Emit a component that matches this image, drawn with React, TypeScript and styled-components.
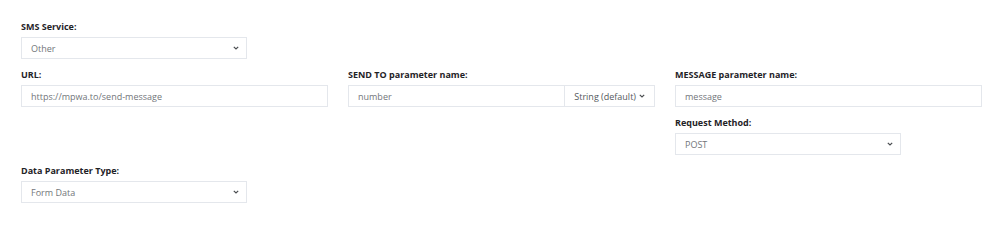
import React from "react";
import styled, { createGlobalStyle } from "styled-components";

const Global = createGlobalStyle`
  html, body { margin: 0; padding: 0; background: #fff; }
  body { font-family: "Open Sans", "Noto Sans", sans-serif; }
  * { box-sizing: border-box; }
`;

const Page = styled.div`
  width: 1000px;
  height: 215px;
  padding: 21px 18px 0 21px;
  background: #fff;
`;

const Grid = styled.div`
  display: grid;
  grid-template-columns: repeat(3, 307px);
  column-gap: 20px;
  align-items: start;
`;

const Column = styled.div`
  display: flex;
  flex-direction: column;
`;

const Field = styled.div`
  display: flex;
  flex-direction: column;
  margin-bottom: 10px;
`;

const Label = styled.label`
  font-size: 9px;
  font-weight: 700;
  line-height: 12px;
  color: #1f2327;
  margin-bottom: 4px;
`;

const Box = styled.div<{ $width?: number }>`
  height: 22px;
  width: ${(p) => (p.$width ? `${p.$width}px` : "100%")};
  border: 1px solid #e4e7ec;
  background: #fff;
  display: flex;
  align-items: center;
  font-size: 9px;
  color: #72767a;
`;

const Value = styled.span`
  flex: 1;
  padding-left: 9px;
  white-space: nowrap;
`;

const Addon = styled.div`
  height: 100%;
  width: 90px;
  border-left: 1px solid #e4e7ec;
  display: flex;
  align-items: center;
  justify-content: flex-end;
  padding-right: 9px;
  gap: 3px;
  color: #55595d;
`;

const ChevronWrap = styled.span`
  display: flex;
  align-items: center;
  padding-right: 7px;
`;

const Chevron = () => (
  <svg width="6" height="4" viewBox="0 0 6 4">
    <path d="M0.8 0.8 L3 3 L5.2 0.8" fill="none" stroke="#4a4d50" strokeWidth="1.2" />
  </svg>
);

const Select = ({ value, width = 226 }: { value: string; width?: number }) => (
  <Box $width={width}>
    <Value>{value}</Value>
    <ChevronWrap>
      <Chevron />
    </ChevronWrap>
  </Box>
);

const Input = ({ value }: { value: string }) => (
  <Box>
    <Value>{value}</Value>
  </Box>
);

export default function App() {
  return (
    <>
      <Global />
      <Page>
        <Field>
          <Label>SMS Service:</Label>
          <Select value="Other" />
        </Field>
        <Grid>
          <Column>
            <Field>
              <Label>URL:</Label>
              <Input value="https://mpwa.to/send-message" />
            </Field>
          </Column>
          <Column>
            <Field>
              <Label>SEND TO parameter name:</Label>
              <Box>
                <Value>number</Value>
                <Addon>
                  String (default)
                  <Chevron />
                </Addon>
              </Box>
            </Field>
          </Column>
          <Column>
            <Field>
              <Label>MESSAGE parameter name:</Label>
              <Input value="message" />
            </Field>
            <Field>
              <Label>Request Method:</Label>
              <Select value="POST" />
            </Field>
          </Column>
        </Grid>
        <Field>
          <Label>Data Parameter Type:</Label>
          <Select value="Form Data" />
        </Field>
      </Page>
    </>
  );
}
